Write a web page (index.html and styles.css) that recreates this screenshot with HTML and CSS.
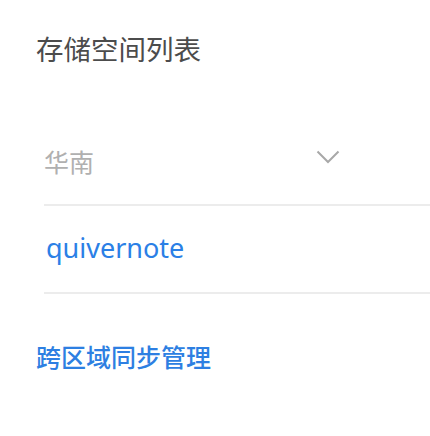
FILE: index.html
```html
<!DOCTYPE html>
<html lang="zh">
<head>
<meta charset="utf-8">
<link rel="stylesheet" href="styles.css">
</head>
<body>
<div class="page">
  <h1 class="title">存储空间列表</h1>
  <div class="list">
    <div class="row region">
      <span class="region-name">华南</span>
      <svg class="chevron" width="24" height="14" viewBox="0 0 24 14"><polyline points="1.5,1.5 12,12 22.5,1.5" fill="none" stroke="#a8a8a8" stroke-width="2"/></svg>
    </div>
    <div class="row bucket">
      <span class="bucket-name">quivernote</span>
    </div>
  </div>
  <div class="section">跨区域同步管理</div>
</div>
</body>
</html>
```
FILE: styles.css
```css
html, body {
  margin: 0;
  padding: 0;
  background: #ffffff;
}
.page {
  width: 430px;
  height: 436px;
  overflow: hidden;
  font-family: "Noto Sans", "Noto Sans CJK SC", sans-serif;
}
.title {
  margin: 0;
  padding: 30px 0 0 36px;
  height: 40px;
  font-size: 27.5px;
  line-height: 40px;
  font-weight: 400;
  color: #4c4c4c;
}
.list {
  margin: 45px 0 0 44px;
}
.row {
  display: flex;
  align-items: center;
  border-bottom: 2px solid #ececec;
}
.region {
  height: 89px;
  justify-content: space-between;
  padding-right: 90px;
}
.region-name {
  font-size: 25px;
  color: #b0b0b0;
  margin-top: 2px;
}
.chevron {
  display: block;
  margin-top: -6px;
}
.bucket {
  height: 86px;
}
.bucket-name {
  font-size: 27px;
  color: #2b80e6;
  margin-left: 2px;
  margin-top: -4px;
}
.section {
  margin: 45px 0 0 36px;
  font-size: 25px;
  line-height: 36px;
  color: #2d7fe2;
  font-weight: 500;
}
```
